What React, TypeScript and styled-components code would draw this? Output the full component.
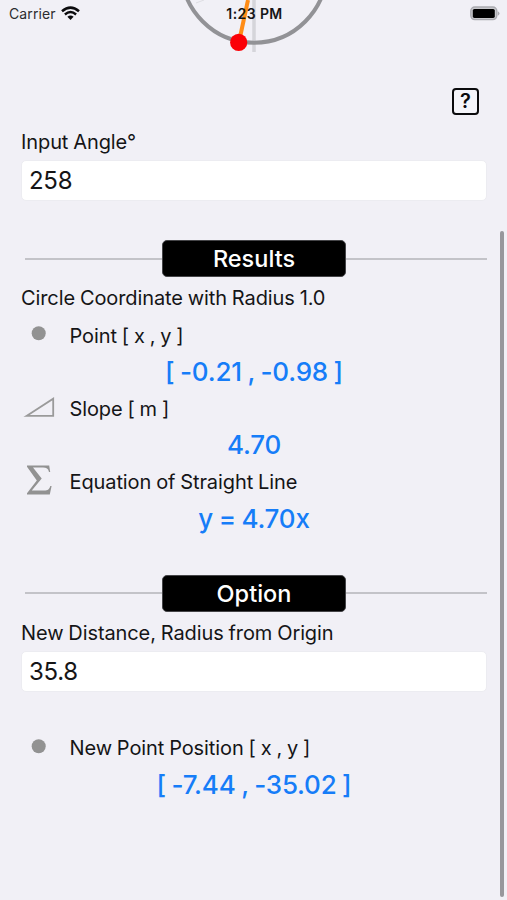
import React, { useState } from "react";
import styled, { createGlobalStyle } from "styled-components";

const GlobalStyle = createGlobalStyle`
  * { box-sizing: border-box; }
  html, body { margin: 0; background: #f1f0f6; }
  body { font-family: Inter, "Liberation Sans", sans-serif; color: #151517; overflow: hidden; }
`;

const Screen = styled.div`
  position: relative;
  width: 507px;
  height: 900px;
  overflow: hidden;
  background: #f1f0f6;
`;

const Dial = styled.svg`
  position: absolute;
  top: 0;
  left: 174px;
`;

const StatusBar = styled.header`
  position: relative;
  display: grid;
  grid-template-columns: 1fr auto 1fr;
  align-items: center;
  height: 27px;
  padding: 0 7px 0 9px;
`;

const Carrier = styled.div`
  display: flex;
  align-items: center;
  gap: 5px;
  font-size: 14px;
  letter-spacing: 0.1px;
  color: #2c2c2f;
`;

const Clock = styled.div`
  font-size: 14px;
  font-weight: 600;
  letter-spacing: 0.4px;
`;

const Battery = styled.svg`
  justify-self: end;
`;

const Toolbar = styled.div`
  display: flex;
  justify-content: flex-end;
  padding: 61px 28px 0 0;
`;

const HelpButton = styled.button`
  display: grid;
  place-items: center;
  width: 27px;
  height: 27px;
  padding: 0;
  border: 2.5px solid #0b0b0d;
  border-radius: 4px;
  background: #f5f5fa;
  color: #0b0b0d;
  font: 600 20px/23px Inter, sans-serif;
`;

const Content = styled.main`
  display: flex;
  flex-direction: column;
  padding: 9px 20px 0 21px;
`;

const Label = styled.div`
  height: 36px;
  line-height: 37px;
  font-size: 20px;
  letter-spacing: -0.1px;
  word-spacing: -0.6px;
  white-space: pre;
`;

const Field = styled.input`
  display: block;
  width: 100%;
  height: 41px;
  padding: 0 7px;
  border: 1px solid #ececf1;
  border-radius: 5px;
  outline: none;
  background: #fff;
  color: #151517;
  font: 400 24px Inter, sans-serif;
  letter-spacing: -0.3px;
`;

const SectionHeader = styled.div<{ $gap: number }>`
  display: grid;
  grid-template-columns: 137px 184px 1fr;
  align-items: center;
  height: 37px;
  margin: ${(p) => p.$gap}px 0 3px 4px;

  &::before,
  &::after {
    content: "";
    height: 2px;
    background: #c3c3c8;
  }
`;

const SectionTitle = styled.h2`
  height: 37px;
  margin: 0;
  border: 1px solid #454548;
  border-radius: 5px;
  background: #000;
  color: #fff;
  font-size: 23.5px;
  font-weight: 500;
  line-height: 35px;
  text-align: center;
`;

const ResultGroup = styled.div<{ $space: number }>`
  padding-top: ${(p) => p.$space}px;
`;

const Entry = styled.section`
  height: 73.3px;
`;

const EntryHead = styled.div`
  display: grid;
  grid-template-columns: 35px 1fr;
  column-gap: 13.5px;
  align-items: center;
  height: 37px;
`;

const Value = styled.output`
  display: block;
  height: 36px;
  line-height: 36px;
  color: #167df8;
  font-size: 26px;
  font-weight: 500;
  text-align: center;
  white-space: pre;
  letter-spacing: -0.2px;
  word-spacing: -1.1px;
`;

const ScrollThumb = styled.div`
  position: absolute;
  top: 231px;
  right: 3.5px;
  width: 4px;
  height: 666px;
  border-radius: 2px;
  background: #97979c;
`;

const PointIcon = () => (
  <svg width="35" height="37" viewBox="0 0 35 37">
    <circle cx="17.7" cy="16.2" r="7" fill="#929292" />
  </svg>
);

const SlopeIcon = () => (
  <svg width="35" height="37" viewBox="0 0 35 37">
    <path d="M5.5 25.9 L32.2 8.7 V25.9 Z" fill="none" stroke="#9a9a9a" strokeWidth="1.8" />
  </svg>
);

const SumIcon = () => (
  <svg width="35" height="37" viewBox="0 0 35 37">
    <path
      d="M6 1.5H28.2L29.2 8H28C27.3 4.8 25.5 3.6 22 3.6H12L20.7 14.4L10.8 26.5H23C27 26.5 28.5 25.2 29.3 22H30.6L28.8 30.5H6V29.2L15.8 16.4L6 2.8Z"
      fill="#929292"
    />
  </svg>
);

const WifiIcon = () => (
  <svg width="19" height="15" viewBox="0 0 19 15" fill="none" stroke="#0b0b0d">
    <path d="M1 5.2Q9.5 -2 18 5.2" strokeWidth="2.6" />
    <path d="M3.9 8.5Q9.5 3.7 15.1 8.5" strokeWidth="2.4" />
    <path d="M6.4 10.8Q9.5 8.1 12.6 10.8L9.5 14Z" fill="#0b0b0d" stroke="none" />
  </svg>
);

export default function App() {
  const [angle, setAngle] = useState("258");
  const [radius, setRadius] = useState("35.8");

  return (
    <>
      <GlobalStyle />
      <Screen>
        <Dial width="160" height="60" viewBox="174 0 160 60">
          <path d="M254 0V52" stroke="#d5d5da" strokeWidth="3.5" />
          <path d="M196 3L204 0" stroke="#dddde2" strokeWidth="1" />
          <circle cx="254" cy="-29.8" r="72.5" fill="none" stroke="#929296" strokeWidth="4" />
          <path d="M248 0L239 42" stroke="#ff8c16" strokeWidth="4" />
          <circle cx="238.7" cy="42.4" r="8.6" fill="#fb0007" />
        </Dial>

        <StatusBar>
          <Carrier>
            Carrier
            <WifiIcon />
          </Carrier>
          <Clock>1:23 PM</Clock>
          <Battery width="31" height="16" viewBox="0 0 31 16">
            <rect x="1.8" y="1" width="26" height="12.6" rx="4" fill="#c8c8cc" stroke="#aaaab0" strokeWidth="1.4" />
            <rect x="3.8" y="2.9" width="22" height="9" rx="1.6" fill="#000" />
            <path d="M28.8 5.2Q32.2 7.4 28.8 9.7Z" fill="#aaaab0" />
          </Battery>
        </StatusBar>

        <Toolbar>
          <HelpButton aria-label="Help">?</HelpButton>
        </Toolbar>

        <Content>
          <Label>Input Angle°</Label>
          <Field value={angle} onChange={(e) => setAngle(e.target.value)} />

          <SectionHeader $gap={39}>
            <SectionTitle>Results</SectionTitle>
          </SectionHeader>
          <Label>Circle Coordinate with Radius 1.0</Label>

          <ResultGroup $space={1}>
            <Entry>
              <EntryHead>
                <PointIcon />
                <Label>Point [ x , y ]</Label>
              </EntryHead>
              <Value>[ -0.21 , -0.98 ]</Value>
            </Entry>
            <Entry>
              <EntryHead>
                <SlopeIcon />
                <Label>Slope [ m ]</Label>
              </EntryHead>
              <Value>4.70</Value>
            </Entry>
            <Entry>
              <EntryHead>
                <SumIcon />
                <Label>Equation of Straight Line</Label>
              </EntryHead>
              <Value>y = 4.70x</Value>
            </Entry>
          </ResultGroup>

          <SectionHeader $gap={38}>
            <SectionTitle>Option</SectionTitle>
          </SectionHeader>
          <Label>New Distance, Radius from Origin</Label>
          <Field value={radius} onChange={(e) => setRadius(e.target.value)} />

          <ResultGroup $space={38}>
            <Entry>
              <EntryHead>
                <PointIcon />
                <Label>New Point Position [ x , y ]</Label>
              </EntryHead>
              <Value>[ -7.44 , -35.02 ]</Value>
            </Entry>
          </ResultGroup>
        </Content>

        <ScrollThumb />
      </Screen>
    </>
  );
}
